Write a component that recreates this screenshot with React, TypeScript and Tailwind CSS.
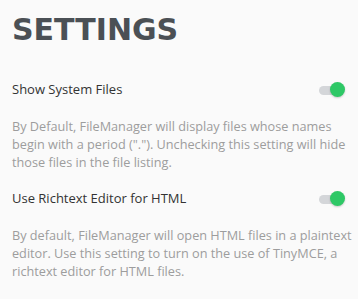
import React from "react";

function Toggle() {
  return (
    <div className="relative w-[24px] h-[16px] flex items-center">
      <div className="w-[22px] h-[9px] rounded-full bg-[#d4d6d9]" />
      <div className="absolute right-[-2px] top-[0px] w-[15px] h-[15px] rounded-full bg-[#2ec866] shadow-[0_1px_2px_rgba(0,0,0,0.2)]" />
    </div>
  );
}

function Setting({ label, lines }: { label: string; lines: string[] }) {
  return (
    <div className="flex flex-col">
      <div className="flex items-center justify-between pr-[3px] h-[20px]">
        <span className="text-[13px] text-[#333]" style={{ fontFamily: '"Open Sans", sans-serif' }}>{label}</span>
        <Toggle />
      </div>
      <p
        className="mt-[17px] text-[12.7px] leading-[18px] text-[#9d9d9d] whitespace-nowrap"
        style={{ fontFamily: '"Open Sans", sans-serif' }}
      >
        {lines.map((l, i) => (
          <span key={i} className="block">{l}</span>
        ))}
      </p>
    </div>
  );
}

export default function App() {
  return (
    <div
      className="w-[358px] h-[299px] bg-[#fafafa] pl-[12px] pr-[6px] overflow-hidden"
      style={{ fontFamily: '"DejaVu Sans", "Open Sans", sans-serif' }}
    >
      <h1 className="pt-[12px] text-[30px] leading-[36px] font-bold tracking-[0px] text-[#4b5055]">SETTINGS</h1>
      <div className="mt-[32px] flex flex-col gap-[18px] pr-[6px]">
        <Setting
          label="Show System Files"
          lines={[
            "By Default, FileManager will display files whose names",
            'begin with a period ("."). Unchecking this setting will hide',
            "those files in the file listing.",
          ]}
        />
        <Setting
          label="Use Richtext Editor for HTML"
          lines={[
            "By default, FileManager will open HTML files in a plaintext",
            "editor. Use this setting to turn on the use of TinyMCE, a",
            "richtext editor for HTML files.",
          ]}
        />
      </div>
    </div>
  );
}
